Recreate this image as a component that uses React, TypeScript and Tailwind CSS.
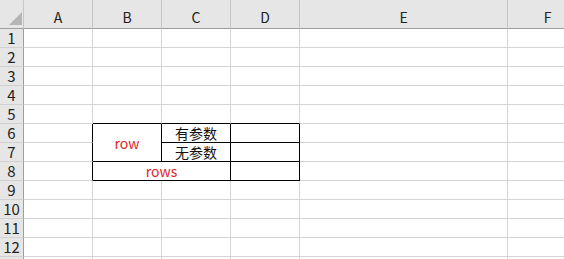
const COLS = ["A", "B", "C", "D", "E", "F"];
const ROWS = [1, 2, 3, 4, 5, 6, 7, 8, 9, 10, 11, 12, 13];

const FONT = { fontFamily: '"Noto Sans CJK SC", "Liberation Sans", sans-serif' };

type Cell = {
  key: string;
  col: number;
  row: number;
  colSpan?: number;
  rowSpan?: number;
  right?: boolean;
  bottom?: boolean;
  text?: string;
  red?: boolean;
};

// which cells get the black table border (B6:D8)
const inTable = (c: number, r: number) => c >= 2 && c <= 4 && r >= 6 && r <= 8;

function buildCells(): Cell[] {
  const cells: Cell[] = [];
  for (const r of ROWS) {
    for (let c = 1; c <= 6; c++) {
      if (c === 2 && r === 7) continue; // merged row B6:B7
      if (c === 3 && r === 8) continue; // merged B8:C8
      const cell: Cell = { key: `${c}-${r}`, col: c, row: r };
      if (c === 2 && r === 6) {
        cell.rowSpan = 2;
        cell.text = "row";
        cell.red = true;
      }
      if (c === 2 && r === 8) {
        cell.colSpan = 2;
        cell.text = "rows";
        cell.red = true;
      }
      if (c === 3 && r === 6) cell.text = "有参数";
      if (c === 3 && r === 7) cell.text = "无参数";
      cell.right = inTable(c, r) || inTable(c + (cell.colSpan ?? 1), r);
      cell.bottom =
        inTable(c, r) || inTable(c, r + (cell.rowSpan ?? 1));
      cells.push(cell);
    }
  }
  return cells;
}

export default function App() {
  const cells = buildCells();

  return (
    <div
      className="w-[564px] h-[259px] overflow-hidden bg-white text-[14px] text-[#222]"
      style={FONT}
    >
      <div className="grid grid-cols-[24px_69px_69px_69px_69px_208px_80px] grid-rows-[29px_repeat(13,19px)]">
        {/* corner */}
        <div className="relative bg-[#e6e6e6] border-r border-b border-r-[#c6c6c6] border-b-[#9e9e9e]">
          <svg className="absolute left-0 top-0" width="23" height="28">
            <polygon points="9,25 22,25 22,12" fill="#b5b5b5" />
          </svg>
        </div>

        {COLS.map((c) => (
          <div
            key={c}
            className="flex items-end justify-center pb-[1px] bg-[#e6e6e6] border-b border-b-[#9e9e9e] border-r border-r-[#c6c6c6] leading-[20px]"
          >
            {c}
          </div>
        ))}

        {ROWS.map((r) => (
          <div
            key={`h${r}`}
            className="flex items-end justify-center bg-[#e6e6e6] border-r border-r-[#9e9e9e] border-b border-b-[#d0d0d0] leading-[18px] text-[15px]"
            style={{ gridColumn: 1, gridRow: r + 1 }}
          >
            {r < 13 ? r : ""}
          </div>
        ))}

        {cells.map((cell) => (
          <div
            key={cell.key}
            className={`flex items-center justify-center border-r border-b leading-none ${
              cell.right ? "border-r-black" : "border-r-[#d4d4d4]"
            } ${cell.bottom ? "border-b-black" : "border-b-[#d4d4d4]"} ${
              cell.red ? "text-[#e0262b]" : "text-[#111]"
            }`}
            style={{
              gridColumn: `${cell.col + 1} / span ${cell.colSpan ?? 1}`,
              gridRow: `${cell.row + 1} / span ${cell.rowSpan ?? 1}`,
            }}
          >
            {cell.text}
          </div>
        ))}
      </div>
    </div>
  );
}
